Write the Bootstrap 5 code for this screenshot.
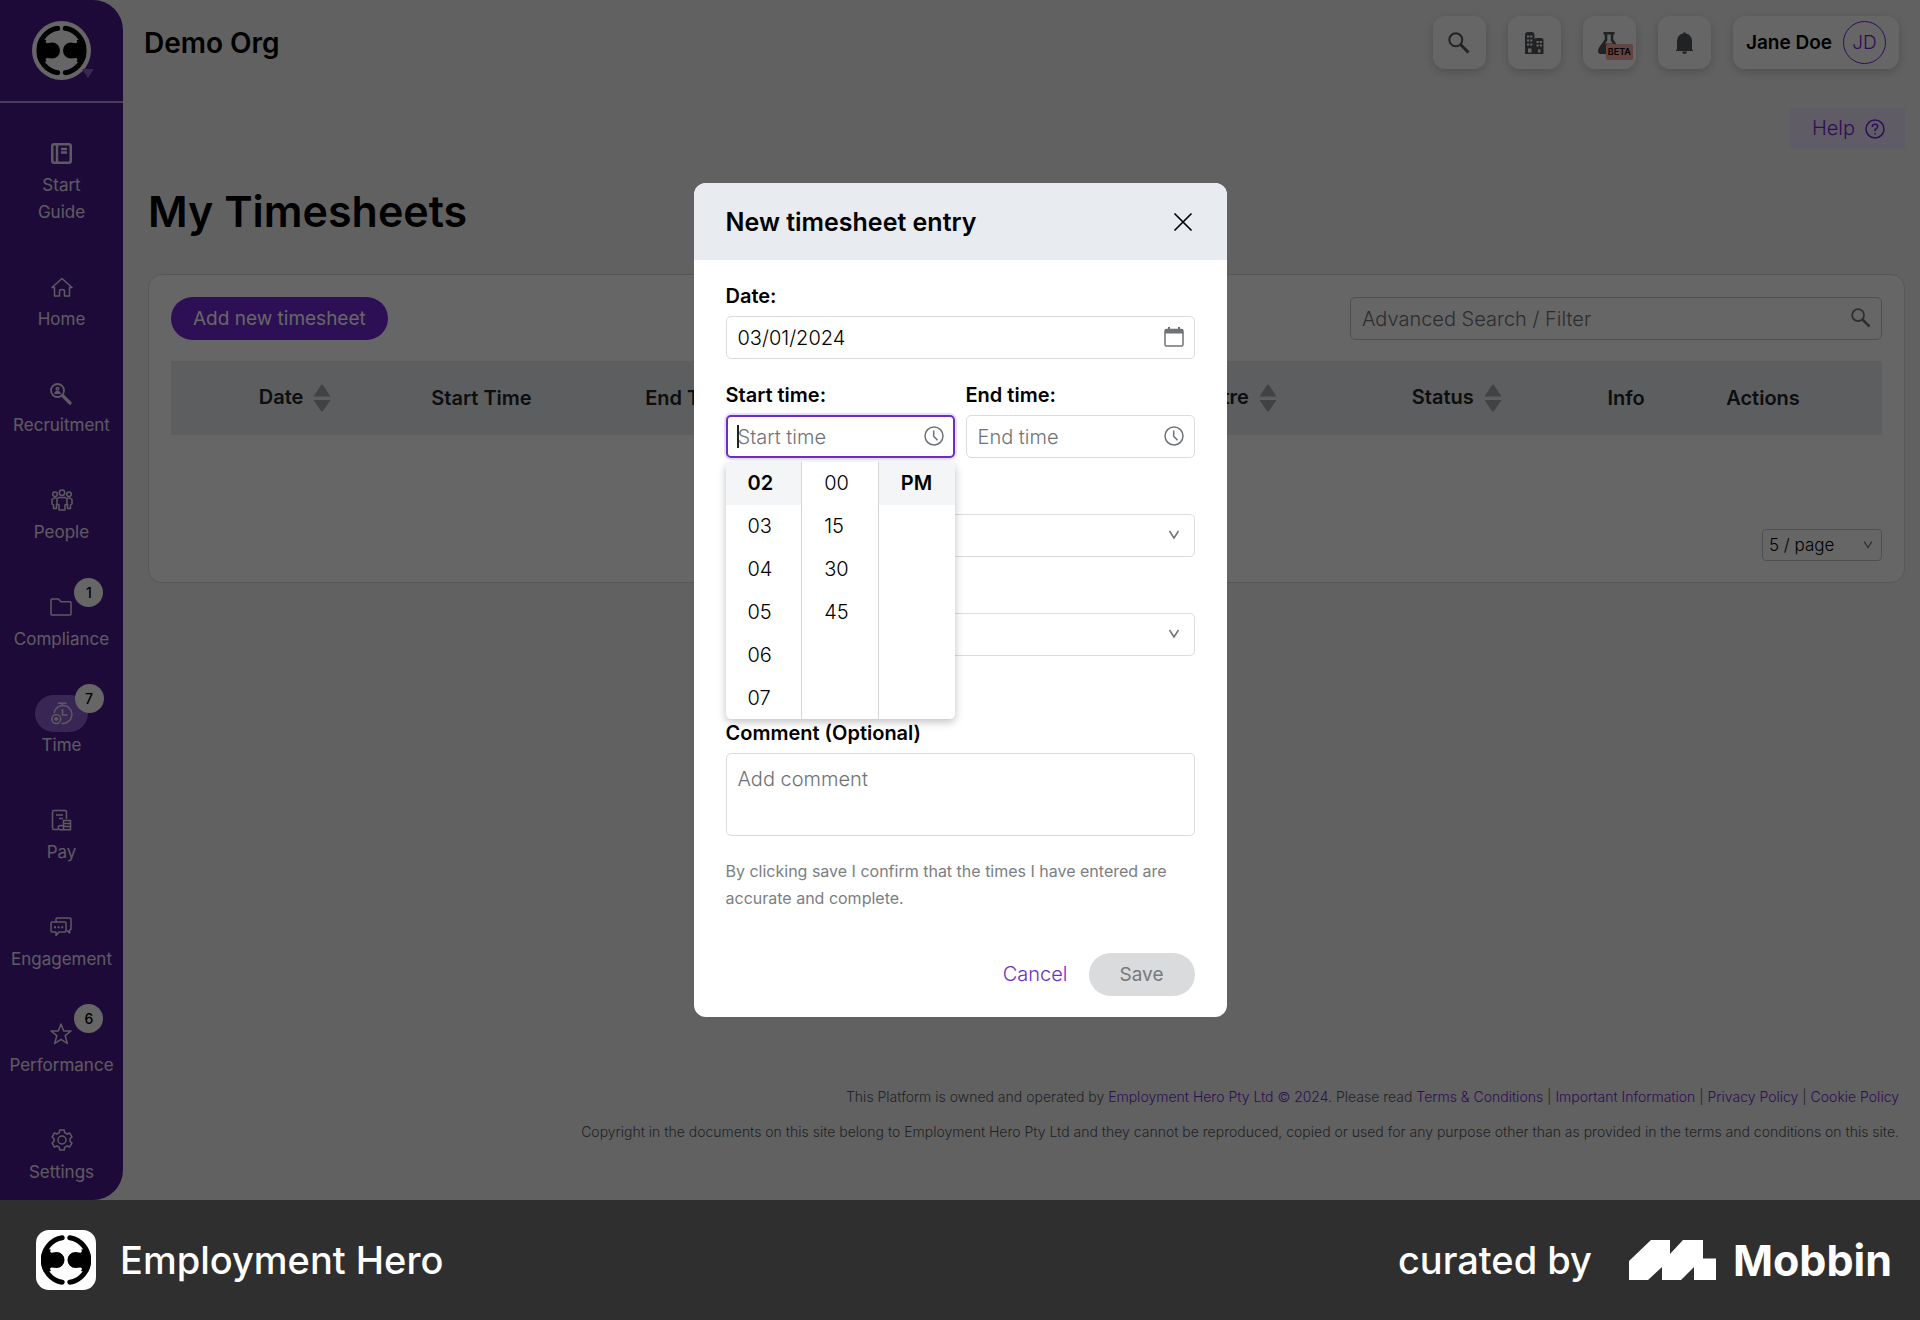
<!DOCTYPE html>
<html lang="en">
<head>
<meta charset="utf-8">
<meta name="viewport" content="width=device-width, initial-scale=1">
<title>My Timesheets</title>
<link href="https://cdn.jsdelivr.net/npm/bootstrap@5.3.0/dist/css/bootstrap.min.css" rel="stylesheet">
<style>
:root{--eh-purple:#7026d4;--eh-ink:#000;--eh-line:#dbdcde;--eh-grey:#6f7277}
body{font-family:Inter,"Liberation Sans",sans-serif;font-size:20px;line-height:27px;color:var(--eh-ink);background:#2f2f2f}
a{text-decoration:none}
svg{display:block;flex:none}
.app-shell{background:#f3f3f3;position:relative}
.side-rail{width:123px;background:#4b198c;border-radius:0 30px 30px 0;color:#fff;flex:none}
.side-brand{height:103px;border-bottom:2px solid #b59ad6}
.brand-caret{position:absolute;right:-3px;bottom:2px}
.side-nav{padding:32px 0 14px}
.side-nav a{color:#e9e2f3;font-size:17px;font-weight:400;line-height:27px;text-align:center;max-width:112px}
.nav-pill-icon{width:53px;height:37px;border-radius:19px}
.side-nav .current .nav-pill-icon{background:#8f5fd3}
.count-dot{position:absolute;left:calc(50% + 13px);top:-11px;width:29px;height:29px;border-radius:50%;background:#fff;color:#000;font-size:14px;font-weight:500;line-height:29px}
.topbar{padding:16px 21px 0 21px}
.org-name{font-size:28px;font-weight:600;line-height:40px}
.tile-set{gap:22px}
.tile{background:#fff;border:0;border-radius:12px;height:53px;min-width:53px;box-shadow:0 3px 10px rgba(0,0,0,.18);color:#54565a}
.tile-user{color:#000;font-weight:600;font-size:19px;padding:0 13px}
.avatar-ring{width:43px;height:43px;margin-left:3px;border-radius:50%;border:1px solid var(--eh-purple);color:var(--eh-purple);font-weight:300;line-height:41px}
.beta-tag{position:absolute;right:3px;bottom:9px;background:#faaa9e;color:#000;font-size:9px;font-weight:600;line-height:16px;border-radius:2px;padding:0 2px}
.help-row{padding-top:39px}
.help-link{background:#f1e6fd;color:var(--eh-purple);font-weight:300;padding:7px 20px 7px 22px;gap:10px}
.content-area{padding:0 15px 0 25px}
.page-title{font-size:43px;font-weight:600;line-height:60px;margin:32px 0 33px}
.sheet-card{border:1px solid #d9dadc;border-radius:14px;background:#fff;padding:22px 22px 21px}
.btn-pill{height:43px;border:0;border-radius:22px;padding:0 22px;font-size:19px}
.btn-main{background:var(--eh-purple);color:#fff}
.field-box{position:relative}
.field-box svg{position:absolute;right:11px;top:11px;color:var(--eh-grey);pointer-events:none}
.field-box .form-control,.field-box .form-select{height:43px;border:1px solid var(--eh-line);border-radius:5px;padding:0 40px 0 11px;font-size:20px;font-weight:300;line-height:27px;color:#000;background:#fff;box-shadow:none}
.field-box .form-control::placeholder{color:#6f7277;opacity:1}
.filter-box{width:532px}
.filter-box .form-control{border-color:#c4c6c9}
.sheet-table{table-layout:fixed;margin:21px 0 0;line-height:27px}
.sheet-table th{height:74px;padding:0;vertical-align:middle;text-align:center;font-weight:600;background:#e8ebee;border:0;font-size:20px;white-space:nowrap}
.sheet-table th svg{display:inline-block;margin-left:10px;vertical-align:middle;color:#a3a5a9}
.page-size{padding-top:94px}
.page-size select{appearance:none;width:120px;height:32px;border:1px solid #c4c6c9;border-radius:4px;padding:0 6px;font-size:17px;font-weight:300;line-height:24px;background:#fff;color:#000}
.page-size svg{position:absolute;right:9px;top:11px;color:var(--eh-grey);pointer-events:none}
.legal{padding:0 21px 58px;font-size:14px;font-weight:300;line-height:21px;color:#55575b}
.legal p{margin-bottom:14px}
.legal a{color:var(--eh-purple)}
.dim-layer{position:absolute;inset:0;background:rgba(0,0,0,.6)}
.entry-modal{width:533px;background:#fff;border-radius:12px}
.entry-head{background:#e8ebf0;height:77px;padding:0 34px 0 32px;border-radius:12px 12px 0 0}
.entry-head h2{font-size:25px;font-weight:600;margin:0}
.entry-head button{border:0;background:none;padding:0}
.entry-body{padding:23px 32px 0}
.entry-body label{font-weight:600;font-size:20px;line-height:27px;margin-bottom:6px;display:block}
.field-grid{display:grid;grid-template-columns:1fr 1fr;gap:23px 11px}
.span-all{grid-column:1/3}
.under-menu{padding-top:33px}
.field-box.is-open .form-control{border:2px solid #6a2fc0;padding-left:10px;box-shadow:0 0 0 2px #ecdffb}
.text-caret{position:absolute;left:11px;top:10px;width:2px;height:23px;background:#222}
.time-menu{position:absolute;z-index:3;top:47px;left:0;right:0;height:257px;background:#fff;border-radius:5px;box-shadow:0 3px 9px rgba(0,0,0,.25);overflow:hidden}
.time-menu ul{list-style:none;margin:0;padding:0;flex:1 1 0}
.time-menu ul+ul{border-left:1px solid #d5d6d8}
.time-menu button{display:block;width:100%;border:0;background:none;text-align:left;height:43px;padding:0 22px;font-weight:300}
.time-menu .picked{background:#f4f5f7;font-weight:600}
.field-box textarea.form-control{height:83px;padding:12px 11px;resize:none}
.comment-group{margin-top:64px}
.entry-note{font-size:16px;line-height:27px;color:#7b7e83;margin:22px 0 0}
.entry-foot{padding:41px 32px 21px;gap:21px}
.btn-plain{border:0;background:none;padding:0;color:#6a2fc0;font-weight:300}
.btn-off,.btn-off:disabled{background:#dadbdc;color:#77797c;padding:0 31px}
.credit-bar{background:#2f2f2f;color:#fff;padding:30px 28px 30px 36px;font-size:38px;font-weight:500;line-height:60px}
.logo-tile{width:60px;height:60px;border-radius:13px;background:#fff}
.mob-brand{margin-left:37px;gap:17px}
.mob-word{font-size:43px;font-weight:700}
</style>
</head>
<body class="d-flex flex-column min-vh-100">
<svg width="0" height="0" class="position-absolute" aria-hidden="true">
<defs>
<symbol id="hero" viewBox="0 0 50 50"><path d="M21.2 2.8A22.5 22.5 0 0 0 21.2 47.2" fill="none" stroke="#000" stroke-width="5" stroke-linecap="round"/><path d="M28.800 2.800A22.500 22.500 0 0 1 28.800 47.200" fill="none" stroke="#000" stroke-width="5" stroke-linecap="round"/><path d="M3 14L10 14.500Q8 17 10.500 17.700L15.500 17A8 8 0 1 1 15.500 33L10.500 32.500Q8 33 10 36L3 37A24 24 0 0 1 3 14ZM47 14L40 14.500Q42 17 39.500 17.700L34.500 17A8 8 0 1 0 34.500 33L39.500 32.500Q42 33 40 36L47 37A24 24 0 0 0 47 14Z"/></symbol>
<symbol id="glass" viewBox="0 0 22 22"><circle cx="7.800" cy="7.800" r="6.500" fill="none" stroke="currentColor" stroke-width="2"/><path d="M12.500 12.500L20.500 20.500" stroke="currentColor" stroke-width="3"/></symbol>
<symbol id="chev" viewBox="0 0 12 12"><path d="M1.500 2L6 9L10.500 2" fill="none" stroke="currentColor" stroke-width="1.500"/></symbol>
<symbol id="clock" viewBox="0 0 20 20"><circle cx="10" cy="10" r="9" fill="none" stroke="currentColor" stroke-width="1.500"/><path d="M9.700 4.500V10.300L13.500 14.300" fill="none" stroke="currentColor" stroke-width="1.500"/></symbol>
<symbol id="sort" viewBox="0 0 18 28"><path d="M8 1Q9 0 10 1L17.500 12.500H.5ZM8 27Q9 28 10 27L17.500 16H.5Z" fill="currentColor"/></symbol>
</defs></svg>

<div class="app-shell d-flex flex-grow-1">
  <aside class="side-rail d-flex flex-column">
    <div class="side-brand d-flex align-items-center justify-content-center">
      <div class="position-relative"><svg width="59" height="59" viewBox="0 0 59 59"><circle cx="29.500" cy="29.500" r="29.500" fill="#fff"/><use href="#hero" x="4.500" y="4.500" width="50" height="50"/></svg>
      <svg class="brand-caret" width="12" height="9" viewBox="0 0 12 9"><path d="M0 0H12L6 9Z" fill="#8f5fd3"/></svg></div>
    </div>
    <nav class="side-nav d-flex flex-column align-items-center justify-content-between flex-grow-1">
      <a href="#" class="d-flex flex-column align-items-center"><span class="nav-pill-icon d-flex align-items-center justify-content-center"><svg width="21" height="21" viewBox="0 0 21 21" fill="none" stroke="currentColor" stroke-width="2.500"><rect x="1.250" y="1.250" width="18.500" height="18.500" rx="2"/><path d="M6 1V20" stroke-width="2.500"/><path d="M10 6H16M10 9.500H16" stroke-width="2.500"/></svg></span><span>Start<br>Guide</span></a>
      <a href="#" class="d-flex flex-column align-items-center"><span class="nav-pill-icon d-flex align-items-center justify-content-center"><svg width="22" height="20" viewBox="0 0 22 20" fill="none" stroke="currentColor" stroke-width="1.500" stroke-linejoin="round"><path d="M1 10.500L11 1.500L21 10.500H18.500V19H13.500V14Q13.500 12.500 11 12.500T8.500 14V19H3.500V10.500Z"/></svg></span>Home</a>
      <a href="#" class="d-flex flex-column align-items-center"><span class="nav-pill-icon d-flex align-items-center justify-content-center"><svg width="22" height="22" viewBox="0 0 22 22" fill="none" stroke="currentColor"><circle cx="7.500" cy="7.500" r="6.500" stroke-width="1.800"/><path d="M12.500 12.500L20 20" stroke-width="3.200" stroke-linecap="round"/><circle cx="7.500" cy="5.700" r="1.300" stroke-width="1.500"/><path d="M4.500 10.500Q5 8.300 7.500 8.300T10.500 10.500Z" fill="currentColor" stroke-width="1"/></svg></span>Recruitment</a>
      <a href="#" class="d-flex flex-column align-items-center"><span class="nav-pill-icon d-flex align-items-center justify-content-center"><svg width="22" height="22" viewBox="0 0 22 22" fill="none" stroke="currentColor" stroke-width="1.500" stroke-linejoin="round"><circle cx="11" cy="3.800" r="2.700"/><circle cx="4" cy="5.200" r="2.300"/><circle cx="18" cy="5.200" r="2.300"/><path d="M8 8.500H14L16 10V15L14 16V21H8V16L6 15V10ZM5.500 9H3L1 10.500V15L2.500 16V19.500H5.500V15M16.500 9H19L21 10.500V15L19.500 16V19.500H16.500V15"/></svg></span>People</a>
      <a href="#" class="d-flex flex-column align-items-center position-relative"><span class="nav-pill-icon d-flex align-items-center justify-content-center"><svg width="22" height="18" viewBox="0 0 22 18" fill="none" stroke="currentColor" stroke-width="1.500" stroke-linejoin="round"><path d="M1 2Q1 1 2 1H8.500L11 3.700H20Q21 3.700 21 4.700V16Q21 17 20 17H2Q1 17 1 16Z"/></svg></span>Compliance<span class="count-dot">1</span></a>
      <a href="#" class="d-flex flex-column align-items-center position-relative current"><span class="nav-pill-icon d-flex align-items-center justify-content-center"><svg width="22" height="23" viewBox="0 0 22 23" fill="none" stroke="currentColor" stroke-width="1.500"><path d="M7 1.200H15.500M11.200 1.200V4M3 11A9 9 0 1 1 10.500 21.300"/><path d="M11.500 7V13H16.500" stroke-width="1.700"/><circle cx="5.200" cy="17" r="4.400"/><path d="M3.200 17H7.200M5.200 15V19" stroke-width="2"/></svg></span>Time<span class="count-dot">7</span></a>
      <a href="#" class="d-flex flex-column align-items-center"><span class="nav-pill-icon d-flex align-items-center justify-content-center"><svg width="21" height="22" viewBox="0 0 21 22" fill="none" stroke="currentColor" stroke-width="1.500"><path d="M7 20.500H3Q1.500 20.500 1.500 19V3Q1.500 1.500 3 1.500H14Q15.500 1.500 15.500 3V10M5 6H12M8 9.500H12"/><path d="M7.500 17.500Q9 15.800 12.500 17V20.700H9Q6.500 20 7.500 17.500ZM12.500 11.500H19.500V20.700H12.500ZM12.500 14.500H19.500M12.500 17.500H19.500"/></svg></span>Pay</a>
      <a href="#" class="d-flex flex-column align-items-center"><span class="nav-pill-icon d-flex align-items-center justify-content-center"><svg width="22" height="20" viewBox="0 0 22 20" fill="none" stroke="currentColor" stroke-width="1.500" stroke-linejoin="round"><path d="M6 4.500V2Q6 1 7 1H20Q21 1 21 2V12Q21 13 20 13H19.500V16L17 13.500"/><path d="M2 5H15Q16 5 16 6V14Q16 15 15 15H9L6 18.500V15H2Q1 15 1 14V6Q1 5 2 5Z"/><path d="M4 10.300H6M7.600 10.300H9.600M11.200 10.300H13.200" stroke-width="2"/></svg></span>Engagement</a>
      <a href="#" class="d-flex flex-column align-items-center position-relative"><span class="nav-pill-icon d-flex align-items-center justify-content-center"><svg width="22" height="22" viewBox="0 0 22 22" fill="none" stroke="currentColor" stroke-width="1.500" stroke-linejoin="round"><path d="M11 1L13.700 8H21L15.200 12.700L17.300 20.500L11 16.300L4.700 20.500L6.800 12.700L1 8H8.300Z"/></svg></span>Performance<span class="count-dot">6</span></a>
      <a href="#" class="d-flex flex-column align-items-center"><span class="nav-pill-icon d-flex align-items-center justify-content-center"><svg width="22" height="22" viewBox="0 0 22 22" fill="none" stroke="currentColor" stroke-width="1.500" stroke-linejoin="round"><circle cx="11" cy="11" r="4"/><path d="M8.800 1H13.200L13.700 3.700L16 5L18.600 4L20.900 7.900L19 9.700V12.300L20.900 14.100L18.600 18L16 17L13.700 18.300L13.200 21H8.800L8.300 18.300L6 17L3.400 18L1.100 14.100L3 12.300V9.700L1.100 7.900L3.400 4L6 5L8.300 3.700Z"/></svg></span>Settings</a>
    </nav>
  </aside>

  <div class="d-flex flex-column flex-grow-1">
    <header class="topbar d-flex align-items-center">
      <div class="org-name me-auto">Demo Org</div>
      <div class="tile-set d-flex align-items-center">
        <button class="tile d-flex align-items-center justify-content-center" aria-label="Search"><svg width="22" height="22"><use href="#glass"/></svg></button>
        <button class="tile d-flex align-items-center justify-content-center" aria-label="Organisation"><svg width="19" height="22" viewBox="0 0 19 22"><path d="M0 22V3Q0 0 3 0H6.500Q9.500 0 9.500 3V7Q10 6 12 6H16Q18.500 6 18.500 8.500V22Z" fill="currentColor"/><path d="M2 4.500H8M2 8.500H8M2 12.500H8M11.500 10H17M11.500 13.500H17" stroke="#fff" stroke-width="2" stroke-dasharray="2.200 1"/><path d="M3 16.500H6.500V20.500H3ZM13 17.500H15.500V20.500H13Z" fill="#fff"/></svg></button>
        <button class="tile d-flex align-items-center justify-content-center position-relative" aria-label="Labs"><svg width="22" height="22" viewBox="0 0 22 22"><path d="M5.500 1.200H16.500M8 1V8L2 16.500Q0 21 4 21H18Q22 21 20 16.500L14 8V1" fill="none" stroke="currentColor" stroke-width="2.600"/><path d="M5 11.500H17L21 20.500H1Z" fill="currentColor"/></svg><span class="beta-tag">BETA</span></button>
        <button class="tile d-flex align-items-center justify-content-center" aria-label="Notifications"><svg width="17" height="22" viewBox="0 0 17 22" fill="currentColor"><path d="M7 1.500Q8.500-1 10 1.500Q16 3 16 9V17L17 18.500V19H0V18.500L1 17V9Q1 3 7 1.500ZM6 19.500H11Q10.500 22 8.500 22T6 19.500Z"/></svg></button>
        <button class="tile tile-user d-flex align-items-center gap-2">Jane Doe <span class="avatar-ring">JD</span></button>
      </div>
    </header>
    <main class="content-area">
      <div class="help-row d-flex justify-content-end"><a href="#" class="help-link d-flex align-items-center">Help <svg width="20" height="20" viewBox="0 0 20 20" fill="none" stroke="currentColor" stroke-width="1.500"><circle cx="10" cy="10" r="9"/><path d="M7.300 8Q7.300 5.300 10 5.300T12.700 7.800Q12.700 9.300 10 10.500V12.300M10 14V15.600"/></svg></a></div>
      <h1 class="page-title">My Timesheets</h1>
      <section class="sheet-card">
        <div class="d-flex justify-content-between align-items-center">
          <button class="btn-pill btn-main">Add new timesheet</button>
          <div class="field-box filter-box"><input class="form-control" type="search" placeholder="Advanced Search / Filter" aria-label="Advanced Search / Filter"><svg width="20" height="20"><use href="#glass"/></svg></div>
        </div>
        <table class="table sheet-table">
          <colgroup><col style="width:2.7%"><col style="width:9.1%"><col style="width:12.7%"><col style="width:11.7%"><col style="width:16.3%"><col style="width:15.9%"><col style="width:13.5%"><col style="width:6.3%"><col style="width:9.7%"><col></colgroup>
          <thead><tr><th></th><th>Date<svg width="18" height="28"><use href="#sort"/></svg></th><th>Start Time</th><th>End Time</th><th>Hours</th><th>Cost Centre<svg width="18" height="28"><use href="#sort"/></svg></th><th>Status<svg width="18" height="28"><use href="#sort"/></svg></th><th>Info</th><th>Actions</th><th></th></tr></thead>
        </table>
        <div class="page-size d-flex justify-content-end"><div class="position-relative"><select aria-label="Rows per page"><option>5 / page</option></select><svg width="10" height="10"><use href="#chev"/></svg></div></div>
      </section>
    </main>
    <footer class="legal mt-auto text-end">
      <p>This Platform is owned and operated by <a href="#">Employment Hero Pty Ltd © 2024</a>. Please read <a href="#">Terms &amp; Conditions</a> | <a href="#">Important Information</a> | <a href="#">Privacy Policy</a> | <a href="#">Cookie Policy</a></p>
      <p class="m-0">Copyright in the documents on this site belong to Employment Hero Pty Ltd and they cannot be reproduced, copied or used for any purpose other than as provided in the terms and conditions on this site.</p>
    </footer>
  </div>

  <div class="dim-layer d-flex align-items-center justify-content-center">
    <form class="entry-modal" role="dialog" aria-labelledby="entry-title">
      <div class="entry-head d-flex align-items-center justify-content-between"><h2 id="entry-title">New timesheet entry</h2><button type="button" aria-label="Close"><svg width="20" height="20" viewBox="0 0 20 20"><path d="M1.500 1.500L18.500 18.500M18.500 1.500L1.500 18.500" stroke="#000" stroke-width="1.700"/></svg></button></div>
      <div class="entry-body">
        <div class="field-grid">
          <div class="span-all"><label for="f-date">Date:</label><div class="field-box"><input id="f-date" class="form-control" type="text" value="03/01/2024"><svg width="20" height="20" viewBox="0 0 20 20"><rect x="1" y="2.500" width="18" height="16.500" rx="1.500" fill="none" stroke="currentColor" stroke-width="1.500"/><path d="M1 2H19V6.500H1ZM4 0H6V3H4ZM14 0H16V3H14Z" fill="currentColor"/></svg></div></div>
          <div><label for="f-start">Start time:</label><div class="field-box is-open"><input id="f-start" class="form-control" type="text" placeholder="Start time"><span class="text-caret"></span><svg width="20" height="20"><use href="#clock"/></svg>
            <div class="time-menu d-flex">
              <ul><li><button type="button" class="picked">02</button></li><li><button type="button">03</button></li><li><button type="button">04</button></li><li><button type="button">05</button></li><li><button type="button">06</button></li><li><button type="button">07</button></li></ul>
              <ul><li><button type="button">00</button></li><li><button type="button">15</button></li><li><button type="button">30</button></li><li><button type="button">45</button></li></ul>
              <ul><li><button type="button" class="picked">PM</button></li></ul>
            </div></div></div>
          <div><label for="f-end">End time:</label><div class="field-box"><input id="f-end" class="form-control" type="text" placeholder="End time"><svg width="20" height="20"><use href="#clock"/></svg></div></div>
          <div class="span-all under-menu"><div class="field-box"><select class="form-select" aria-label="Location"><option></option></select><svg width="20" height="20" viewBox="-4 -4 20 20"><path d="M1.500 2L6 9L10.500 2" fill="none" stroke="currentColor" stroke-width="1.500"/></svg></div></div>
          <div class="span-all under-menu"><div class="field-box"><select class="form-select" aria-label="Work type"><option></option></select><svg width="20" height="20" viewBox="-4 -4 20 20"><path d="M1.500 2L6 9L10.500 2" fill="none" stroke="currentColor" stroke-width="1.500"/></svg></div></div>
        </div>
        <div class="comment-group"><label for="f-note">Comment (Optional)</label><div class="field-box"><textarea id="f-note" class="form-control" placeholder="Add comment"></textarea></div></div>
        <p class="entry-note">By clicking save I confirm that the times I have entered are accurate and complete.</p>
      </div>
      <div class="entry-foot d-flex justify-content-end align-items-center"><button type="button" class="btn-plain">Cancel</button><button type="submit" class="btn-pill btn-off" disabled>Save</button></div>
    </form>
  </div>
</div>

<div class="credit-bar d-flex align-items-center">
  <div class="logo-tile d-flex align-items-center justify-content-center"><svg width="50" height="50"><use href="#hero"/></svg></div>
  <div class="me-auto ps-4">Employment Hero</div>
  <div>curated by</div>
  <div class="mob-brand d-flex align-items-center"><svg width="87" height="40" viewBox="0 0 87 40"><path d="M0 21L22 0H41V14L54 0H74V18.500H87V40H65V27L52 40H33V27L19 40H0Z" fill="#fff"/></svg><span class="mob-word">Mobbin</span></div>
</div>
<script src="https://cdn.jsdelivr.net/npm/bootstrap@5.3.0/dist/js/bootstrap.bundle.min.js"></script>
</body>
</html>
